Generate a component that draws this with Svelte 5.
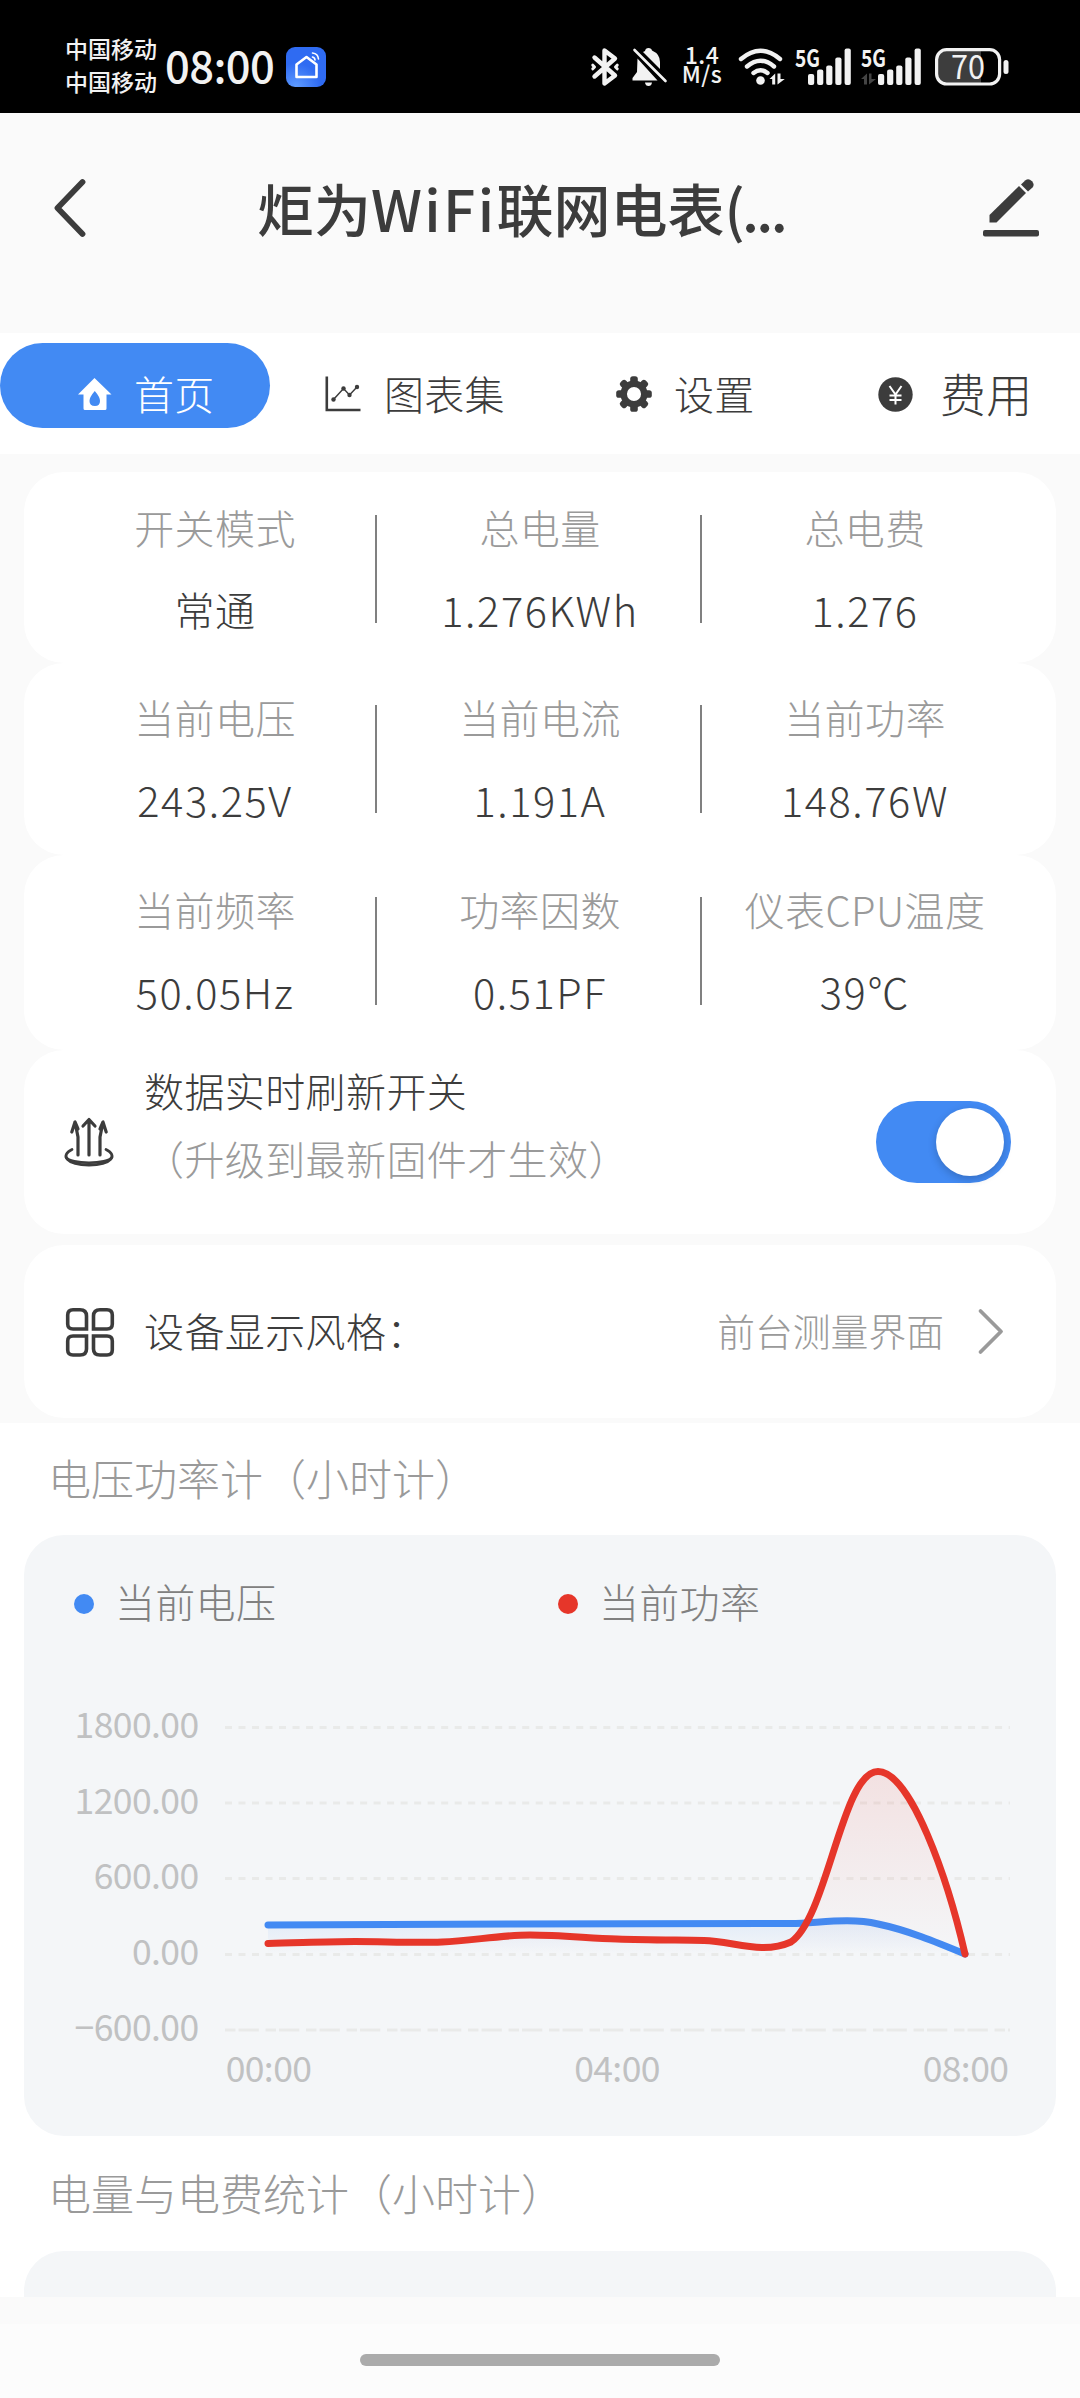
<script>
  const stats = [
    [
      { label: "开关模式", value: "常通" },
      { label: "总电量", value: "1.276KWh" },
      { label: "总电费", value: "1.276" },
    ],
    [
      { label: "当前电压", value: "243.25V" },
      { label: "当前电流", value: "1.191A" },
      { label: "当前功率", value: "148.76W" },
    ],
    [
      { label: "当前频率", value: "50.05Hz" },
      { label: "功率因数", value: "0.51PF" },
      { label: "仪表CPU温度", value: "39℃" },
    ],
  ];

  const yTicks = [
    { text: "1800.00", y: 192.5 },
    { text: "1200.00", y: 268 },
    { text: "600.00", y: 343.5 },
    { text: "0.00", y: 419.5 },
    { text: "−600.00", y: 495 },
  ];

  const xTicks = [
    { text: "00:00", x: 244.5 },
    { text: "04:00", x: 593 },
    { text: "08:00", x: 941.5 },
  ];

  const signalBars = [
    { x: 0, h: 11 },
    { x: 9.1, h: 15.5 },
    { x: 18.2, h: 19.5 },
    { x: 27.3, h: 27.5 },
    { x: 36.6, h: 36.5 },
  ];

  const voltageLine =
    "M244 390 C420 389 590 388.5 767 388.5 C796 388 825 382.5 854 389 C883 395 912 407 941 419";
  const powerLine =
    "M244 408.5 C273 408 302 406.5 331 406.5 C360 406.5 389 408 418 407 C447 406 476 400 506 400 C535 400 564 403 593 404 C622 405 651 405 680 405.5 C709 406 738 420 767 407 C804 381 818 236.5 854 236.5 C887 236.5 924 345 941 419";

  let refreshOn = $state(true);
</script>

<div class="screen">
  <div class="status">
    <div class="carriers">
      <span>中国移动</span>
      <span>中国移动</span>
    </div>
    <span class="clock">08:00</span>
    <svg class="home-app" width="40" height="40" viewBox="0 0 40 40">
      <defs>
        <radialGradient id="app-bg" cx="0.25" cy="1" r="0.6">
          <stop offset="0" stop-color="#5e9bff" />
          <stop offset="1" stop-color="#2f6bf2" />
        </radialGradient>
      </defs>
      <rect width="40" height="40" rx="9" fill="url(#app-bg)" />
      <path d="M10.5 30 V17.5 L20.5 10 L30.5 17.5 V30 Z" fill="none" stroke="#fff" stroke-width="2.6" stroke-linejoin="round" />
      <path d="M26.5 6 Q32 6.5 32.5 12 M26.5 10 Q28.8 10.5 29 13" fill="none" stroke="#fff" stroke-width="1.6" stroke-linecap="round" />
    </svg>

    <div class="status-right">
      <svg width="28" height="38" viewBox="0 0 28 38" fill="none" stroke="#f2f2f2" stroke-width="4.4" stroke-linejoin="round" stroke-linecap="round">
        <path d="M3.5 9.5 L24 27.5 L13.5 35.5 V2.5 L24 10.5 L3.5 28.5" />
        <path d="M1.8 17.2 L3.5 19 L1.8 20.8 M26.2 17.2 L24.5 19 L26.2 20.8" stroke-width="3" />
      </svg>
      <svg class="bell" width="35" height="40" viewBox="0 0 35 40" fill="#f2f2f2">
        <path d="M13 4 Q13.5 1 16.5 1 Q19.5 1 20 3.5 Q28 7 28 15 V22 L11 5 Z" />
        <path d="M5.5 11.5 L25.5 33.5 H0.5 V31 L5 25 Z" />
        <path d="M2.5 3 L33.5 34" stroke="#f2f2f2" stroke-width="2.6" stroke-linecap="round" />
        <path d="M13 35.5 H20 Q19.5 39 16.5 39 Q13.5 39 13 35.5 Z" />
      </svg>
      <div class="speed">
        <span>1.4</span>
        <span>M/s</span>
      </div>
      <svg class="wifi" width="47" height="38" viewBox="0 0 47 38" fill="none" stroke="#f2f2f2" stroke-linecap="round">
        <path d="M3 11 Q22.5 -5.5 42 11" stroke-width="4.4" />
        <path d="M9 18.5 Q22.5 7 36 18.5" stroke-width="4.4" />
        <path d="M15.5 25 Q22.5 19.5 29.5 25" stroke-width="4.4" />
        <circle cx="22.5" cy="32.5" r="4.3" fill="#f2f2f2" stroke="none" />
        <path d="M31.5 31 L37.2 25.5 V36.5 H34.2 V31 Z M39.5 25.5 H42.5 V31 H46.8 L39.5 36.5 Z" fill="#f2f2f2" stroke="none" />
      </svg>
      <svg class="signal" width="57" height="38" viewBox="0 0 57 38" fill="#f2f2f2">
        <text x="0" y="18.5" class="net" textLength="25" lengthAdjust="spacingAndGlyphs">5G</text>
        {#each signalBars as bar}
          <rect x={13 + bar.x} y={37 - bar.h} width="6.2" height={bar.h} rx="2" />
        {/each}
      </svg>
      <svg class="signal" width="60" height="38" viewBox="0 0 60 38" fill="#f2f2f2">
        <text x="0" y="18.5" class="net" textLength="25" lengthAdjust="spacingAndGlyphs">5G</text>
        <path d="M0 31 L6 25.5 V36.5 H3 V31 Z M8 25.5 H10.5 V31 H15 L8 36.5 Z" fill="#444" />
        {#each signalBars as bar}
          <rect x={17 + bar.x} y={37 - bar.h} width="6.2" height={bar.h} rx="2" />
        {/each}
      </svg>
      <svg class="battery" width="74" height="38" viewBox="0 0 74 38">
        <path d="M11 3 H46 V35 H11 Q3 35 3 27 V11 Q3 3 11 3 Z" fill="#3d3d3d" />
        <rect x="1.6" y="1.6" width="63" height="34.4" rx="10" fill="none" stroke="#f2f2f2" stroke-width="3.2" />
        <rect x="68.5" y="12" width="5" height="14" rx="2.5" fill="#f2f2f2" />
        <text x="16" y="30.8" fill="#f2f2f2" class="percent" textLength="34" lengthAdjust="spacingAndGlyphs">70</text>
      </svg>
    </div>
  </div>

  <header class="header">
    <svg width="36" height="60" viewBox="0 0 36 60">
      <path d="M32.5 4 L7.5 30 L32.5 56" fill="none" stroke="#3c3c3c" stroke-width="5.8" stroke-linecap="round" stroke-linejoin="round" />
    </svg>
    <h1>炬为<span class="latin">WiFi</span>联网电表(<span class="dots">...</span></h1>
    <svg width="58" height="60" viewBox="0 0 58 60" fill="#3c3c3c">
      <path d="M7.5 44.5 V37 L37 8 L44 15 L14.5 44.5 Z" />
      <path d="M39 6.5 L43.5 2.3 Q46.5 0 50 3.2 Q53 6.5 50.5 9.5 L46 13.5 Z" />
      <rect x="1" y="52" width="56" height="6.5" rx="2" />
    </svg>
  </header>

  <nav class="tabs">
    <button class="tab home active">
      <svg width="34" height="34" viewBox="0 0 34 34">
        <path fill-rule="evenodd" fill="#fff" d="M16.5 1 L33.5 17.5 H28.5 V31.5 Q28.5 33 27 33 H7 Q5.5 33 5.5 31.5 V17.5 H0 Z M16.8 14 Q11.5 20 11.5 24 Q11.5 29 17 29 Q22 29 22 24 Q22 20 16.8 14 Z" />
      </svg>
      <span>首页</span>
    </button>
    <button class="tab charts">
      <svg width="36" height="36" viewBox="0 0 36 36" fill="none" stroke="#3c3c3c">
        <path d="M1.8 0.5 V34 H35.5" stroke-width="2.6" />
        <path d="M8.5 23.5 L18.5 12.5 L24.5 19 L32 11" stroke-width="1.5" />
        <g fill="#3c3c3c" stroke="none">
          <circle cx="8.5" cy="23.5" r="2.2" />
          <circle cx="18.5" cy="12.5" r="2.2" />
          <circle cx="24.5" cy="19" r="2.2" />
          <circle cx="32" cy="11" r="2.2" />
        </g>
      </svg>
      <span>图表集</span>
    </button>
    <button class="tab settings">
      <svg width="36" height="36" viewBox="-18 -18 36 36">
        <g fill="#3c3c3c">
          {#each [0, 45, 90, 135, 180, 225, 270, 315] as angle}
            <rect x="-3.8" y="-17.8" width="7.6" height="9" rx="2.6" transform="rotate({angle})" />
          {/each}
        </g>
        <circle r="10.3" fill="none" stroke="#3c3c3c" stroke-width="6.5" />
      </svg>
      <span>设置</span>
    </button>
    <button class="tab cost">
      <svg width="35" height="35" viewBox="0 0 35 35">
        <circle cx="17.5" cy="17.5" r="17.2" fill="#3c3c3c" />
        <path d="M11.5 9 L17.5 17.5 L23.5 9 M17.5 17.5 V27.5 M11.5 18.5 H23.5 M11.5 23 H23.5" fill="none" stroke="#fff" stroke-width="2" />
      </svg>
      <span>费用</span>
    </button>
  </nav>

  <main class="cards">
    {#each stats as row}
      <section class="card stat-row">
        {#each row as item}
          <div class="stat">
            <span class="label">{item.label}</span>
            <span class="value">{item.value}</span>
          </div>
        {/each}
      </section>
    {/each}

    <section class="card refresh">
      <svg width="52" height="50" viewBox="0 0 52 50" fill="none" stroke="#3c3c3c" stroke-linecap="round" stroke-linejoin="round">
        <path d="M26 38 V2.5 M20 9 L26 2.5 L32 9" stroke-width="3.2" />
        <path d="M15 38 V20 L12 5 L8.8 15 M12 5 L15 12" stroke-width="3.2" />
        <path d="M37 38 V20 L40 5 L37 12 M40 5 L43.2 15" stroke-width="3.2" />
        <path d="M9 32.5 C-3 38 3 48 26 48 C49 48 55 38 43 32.5" stroke-width="2.8" />
        <path d="M3 40 C7 47.5 45 47.5 49 40" stroke-width="2.5" />
      </svg>
      <div class="refresh-text">
        <span>数据实时刷新开关</span>
        <span class="hint">（升级到最新固件才生效）</span>
      </div>
      <button class="switch" class:on={refreshOn} aria-label="数据实时刷新开关" onclick={() => (refreshOn = !refreshOn)}>
        <i></i>
      </button>
    </section>

    <section class="card style-row">
      <svg width="50" height="50" viewBox="0 0 50 50" fill="none" stroke="#3c3c3c" stroke-width="3.6">
        <path d="M8 2.7 H15 Q21.5 2.7 21.5 9 V22 H8 Q2.7 22 2.7 17 V8 Q2.7 2.7 8 2.7 Z" />
        <path d="M35 2.7 H42 Q47.3 2.7 47.3 8 V17 Q47.3 22 42 22 H28.5 V9 Q28.5 2.7 35 2.7 Z" />
        <path d="M8 29 H21.5 V42 Q21.5 48 15 48 H8 Q2.7 48 2.7 43 V34 Q2.7 29 8 29 Z" />
        <path d="M28.5 29 H42 Q47.3 29 47.3 34 V43 Q47.3 48 42 48 H35 Q28.5 48 28.5 42 Z" />
      </svg>
      <span class="style-name">设备显示风格：</span>
      <span class="style-value">前台测量界面</span>
      <svg width="26" height="46" viewBox="0 0 26 46">
        <path d="M2.5 2 L23 22.5 L2.5 43" fill="none" stroke="#9a9a9a" stroke-width="3.8" stroke-linecap="round" stroke-linejoin="round" />
      </svg>
    </section>
  </main>

  <section class="reports">
    <h2>电压功率计（小时计）</h2>
    <div class="panel">
      <div class="legend">
        <span class="voltage">当前电压</span>
        <span class="power">当前功率</span>
      </div>
      <svg class="chart" width="1032" height="481" viewBox="0 120 1032 481">
        <defs>
          <linearGradient id="voltage-fill" gradientUnits="userSpaceOnUse" x1="0" y1="385" x2="0" y2="419">
            <stop offset="0" stop-color="#428af3" stop-opacity="0.1" />
            <stop offset="1" stop-color="#428af3" stop-opacity="0" />
          </linearGradient>
          <linearGradient id="power-fill" gradientUnits="userSpaceOnUse" x1="0" y1="237" x2="0" y2="419">
            <stop offset="0" stop-color="#e8362a" stop-opacity="0.11" />
            <stop offset="1" stop-color="#e8362a" stop-opacity="0" />
          </linearGradient>
        </defs>
        {#each yTicks as tick, i}
          <line
            x1="201"
            x2="986"
            y1={tick.y}
            y2={tick.y}
            class="grid"
            stroke-dasharray={i === yTicks.length - 1 ? "10.5 3 20.3 6.7" : "7 6.51"}
          />
          <text x="174.5" y={tick.y + 10.5} text-anchor="end" class="tick">{tick.text}</text>
        {/each}
        {#each xTicks as tick}
          <text x={tick.x} y="547" text-anchor="middle" class="tick">{tick.text}</text>
        {/each}
        <path d="{voltageLine} H244 Z" fill="url(#voltage-fill)" />
        <path d={voltageLine} class="line" stroke="#428af3" />
        <path d="{powerLine} H244 Z" fill="url(#power-fill)" />
        <path d={powerLine} class="line" stroke="#e6362a" />
      </svg>
    </div>

    <h2 class="next">电量与电费统计（小时计）</h2>
    <div class="panel cut"></div>
  </section>

  <footer class="gesture">
    <i></i>
  </footer>
</div>

<style>
  :global(body) {
    margin: 0;
    background: #fafafa;
  }

  .screen {
    display: flex;
    flex-direction: column;
    width: 1080px;
    height: 2398px;
    overflow: hidden;
    background: #fafafa;
    color: #3c3c3c;
    font-family: "Noto Sans CJK SC", sans-serif;
    font-weight: 300;
    font-size: 40px;
    white-space: nowrap;
  }

  svg {
    display: block;
    flex: none;
    overflow: visible;
  }

  button {
    border: none;
    padding: 0;
    background: none;
    color: inherit;
    font: inherit;
  }

  .status {
    display: flex;
    align-items: center;
    height: 113px;
    padding: 20px 71px 0 65px;
    box-sizing: border-box;
    background: #000;
    color: #f2f2f2;
  }

  .carriers {
    display: flex;
    flex-direction: column;
    width: 100px;
    padding-bottom: 4px;
    font-size: 23px;
    font-weight: 500;
    line-height: 32.5px;
  }

  .clock {
    width: 121px;
    padding-bottom: 4px;
    font-size: 43.5px;
    font-weight: 500;
    line-height: 44px;
    letter-spacing: -0.6px;
  }

  .status-right {
    display: flex;
    align-items: center;
    margin-left: auto;
  }

  .bell {
    margin-left: 13px;
  }

  .speed {
    display: flex;
    flex-direction: column;
    align-items: center;
    width: 44px;
    margin-left: 13px;
    padding-bottom: 5px;
    font-size: 23px;
    font-weight: 500;
    line-height: 19.5px;
    letter-spacing: 0.5px;
  }

  .wifi {
    margin-left: 14px;
  }

  .signal {
    margin-left: 9.5px;
  }

  .net {
    font-size: 23.5px;
    font-weight: 700;
  }

  .battery {
    margin-left: 14px;
  }

  .percent {
    font-size: 33px;
    font-weight: 400;
  }

  .header {
    display: flex;
    align-items: center;
    height: 220px;
    padding: 0 40px 30px 50px;
    box-sizing: border-box;
  }

  .header h1 {
    flex: 1;
    margin: -2px 0 0;
    padding-right: 26px;
    text-align: center;
    font-size: 57px;
    font-weight: 500;
    line-height: 60px;
  }

  .latin {
    letter-spacing: 2.4px;
  }

  .dots {
    margin-left: -3px;
    letter-spacing: -2.6px;
  }

  .tabs {
    display: grid;
    grid-template-columns: repeat(4, 270px);
    height: 121px;
    padding-top: 10px;
    box-sizing: border-box;
    background: #fff;
  }

  .tab {
    display: flex;
    align-items: center;
    height: 85px;
    padding-top: 17px;
    box-sizing: border-box;
    border-radius: 43px;
    line-height: 50px;
    letter-spacing: 0.3px;
  }

  .tab span {
    margin-top: -3px;
  }

  .tab.active {
    background: #428af3;
    color: #fff;
  }

  .tab.home {
    padding-left: 78px;
    gap: 22px;
  }

  .tab.charts {
    padding-left: 55px;
    gap: 23px;
  }

  .tab.settings {
    padding-left: 76px;
    gap: 22px;
  }

  .tab.cost {
    padding-left: 68px;
    gap: 27px;
    font-size: 46px;
  }

  .tab.cost span {
    margin-top: -5px;
  }

  .cards {
    display: flex;
    flex-direction: column;
    padding: 18px 24px 5px;
  }

  .card {
    display: flex;
    border-radius: 40px;
    background: #fff;
  }

  .stat-row {
    height: 191px;
    padding: 2px 31px 0 28px;
    box-sizing: border-box;
    align-items: center;
  }

  .stat-row:nth-child(2) {
    height: 192px;
    padding-top: 0;
  }

  .stat-row:nth-child(3) {
    height: 195px;
    padding-top: 0;
    padding-bottom: 3px;
  }

  .stat {
    display: flex;
    flex: 1;
    flex-direction: column;
    justify-content: space-between;
    align-items: center;
    height: 108px;
    padding: 0 0 2px 3px;
    box-sizing: border-box;
    border-right: 2px solid #808080;
  }

  .stat:last-child {
    border-right: none;
  }

  .label,
  .value {
    height: 24px;
    line-height: 24px;
    letter-spacing: 0.4px;
  }

  .label {
    color: #9a9a9a;
  }

  .value {
    font-size: 41.5px;
    letter-spacing: 1.6px;
  }

  .stat-row:first-child .stat:first-child .value {
    font-size: 40px;
    letter-spacing: 0.4px;
  }

  .refresh {
    height: 184px;
    padding: 0 45px 0 39px;
    box-sizing: border-box;
    align-items: center;
  }

  .refresh-text {
    display: flex;
    flex: 1;
    flex-direction: column;
    margin: -36px 0 0 29px;
    line-height: 68px;
    letter-spacing: 0.4px;
  }

  .hint {
    color: #9a9a9a;
  }

  .switch {
    width: 135px;
    height: 82px;
    padding: 7px;
    border-radius: 41px;
    background: #ccc;
  }

  .switch.on {
    background: #428af3;
  }

  .switch i {
    display: block;
    width: 68px;
    height: 68px;
    border-radius: 50%;
    background: #fff;
    box-shadow: 0 3px 8px rgba(0, 0, 0, 0.2);
  }

  .switch.on i {
    margin-left: auto;
  }

  .style-row {
    height: 173px;
    margin-top: 11px;
    padding: 0 52px 0 41px;
    align-items: center;
  }

  .style-name {
    flex: 1;
    margin: -4px 0 0 29px;
    letter-spacing: 0.4px;
  }

  .style-value {
    margin: -4px 34px 0 0;
    color: #9a9a9a;
    font-size: 37.8px;
  }

  .reports {
    height: 874px;
    padding: 0 24px;
    overflow: hidden;
    background: #fff;
  }

  h2 {
    height: 112px;
    margin: 0 0 0 24px;
    color: #9a9a9a;
    font-size: 43px;
    font-weight: 300;
    line-height: 108px;
  }

  h2.next {
    height: 115px;
    line-height: 113px;
  }

  .panel {
    height: 601px;
    border-radius: 40px;
    background: #f4f6f8;
  }

  .panel.cut {
    height: 120px;
  }

  .legend {
    display: flex;
    height: 120px;
    padding: 12px 0 0 50px;
    box-sizing: border-box;
    color: #808080;
    line-height: 106px;
    letter-spacing: 0.3px;
  }

  .legend span {
    display: flex;
    align-items: center;
    width: 484px;
  }

  .legend span::before {
    content: "";
    width: 20px;
    height: 20px;
    margin: 6px 21px 0 0;
    border-radius: 50%;
    background: #428af3;
  }

  .legend .power::before {
    background: #e6362a;
  }

  .grid {
    stroke: #e9eae9;
    stroke-width: 3;
  }

  .tick {
    fill: #c0c1c2;
    font-size: 35.5px;
    font-weight: 400;
    letter-spacing: -0.6px;
  }

  .line {
    fill: none;
    stroke-width: 7;
    stroke-linecap: round;
    stroke-linejoin: round;
  }

  .gesture {
    flex: 1;
    margin-top: 27px;
    padding-top: 30px;
    background: #fcfcfc;
  }

  .gesture i {
    display: block;
    width: 360px;
    height: 12px;
    margin: 0 auto;
    border-radius: 6px;
    background: #ababab;
  }
</style>
